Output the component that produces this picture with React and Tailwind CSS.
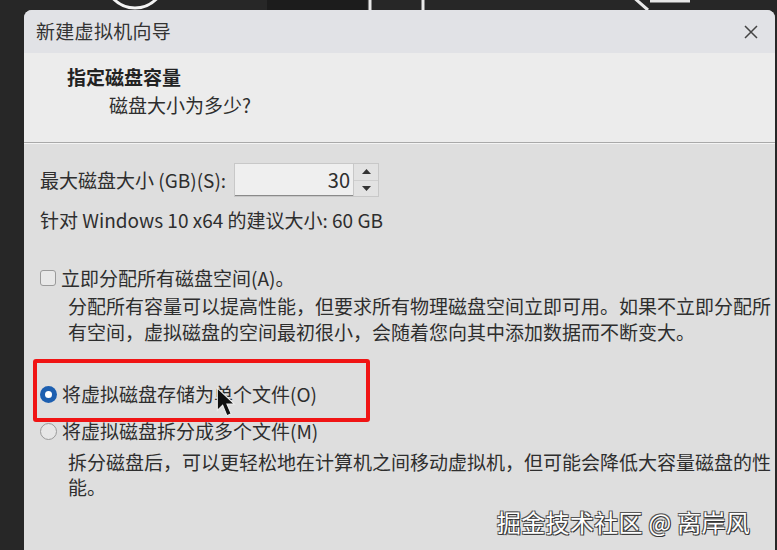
import React from "react";

const CJK = { fontFamily: '"Noto Sans CJK SC", "Noto Sans", sans-serif' };

function Radio({ checked }) {
  return checked ? (
    <span className="w-[17px] h-[17px] rounded-full bg-[#1d5fb0] flex items-center justify-center shrink-0">
      <span className="w-[7px] h-[7px] rounded-full bg-white" />
    </span>
  ) : (
    <span className="w-[17px] h-[17px] rounded-full border border-[#9a9a9a] bg-[#e6e6e6] shrink-0" />
  );
}

export default function App() {
  return (
    <div
      className="relative w-[777px] h-[550px] overflow-hidden bg-[#272727] text-[#2e2e2e]"
      style={CJK}
    >
      {/* background decorations behind the dialog */}
      <svg className="absolute left-0 top-0" width="777" height="12">
        <rect x="267" y="0" width="100" height="12" fill="#1c1c1c" />
        <circle cx="135" cy="-22" r="30" fill="none" stroke="#f2f2f2" strokeWidth="3" />
        <line x1="370" y1="0" x2="370" y2="12" stroke="#e8e8e8" strokeWidth="3" />
        <line x1="423" y1="0" x2="423" y2="12" stroke="#e8e8e8" strokeWidth="3" />
        <path d="M632 -4 L648 10 M650 1 L690 1" stroke="#e8e8e8" strokeWidth="3" fill="none" />
      </svg>

      <div className="pt-[10px] pl-[24px] pr-[2px] h-full">
        <div className="relative h-full rounded-t-[8px] overflow-hidden bg-[#dedede] flex flex-col">
          {/* title bar */}
          <div className="h-[43px] bg-[#e1e2e6] flex items-center justify-between pl-[12px] pr-[17px] shrink-0">
            <span className="text-[19px] text-[#333] tracking-[0.3px]">新建虚拟机向导</span>
            <svg width="14" height="14" viewBox="0 0 14 14">
              <path d="M1 1 L13 13 M13 1 L1 13" stroke="#444" strokeWidth="1.5" />
            </svg>
          </div>

          {/* header */}
          <div className="h-[90px] bg-[#ececec] border-b border-[#a9a9a9] shrink-0 pt-[11px]">
            <div className="pl-[43px] text-[19px] font-bold leading-[26px] text-[#222]">指定磁盘容量</div>
            <div className="pl-[85px] text-[19px] leading-[26px] mt-[2px]">磁盘大小为多少?</div>
          </div>
          <div className="h-px bg-[#f4f4f4]" />

          {/* body */}
          <div className="flex flex-col pl-[16px] pt-[19px] text-[19px]">
            <div className="flex items-center h-[34px]">
              <span className="w-[194px] leading-[26px]">最大磁盘大小 (GB)(S):</span>
              <div className="flex h-[34px] border border-[#c8c8c8]">
                <div className="w-[118px] bg-[#efefef] border-b border-[#8a8a8a] flex items-center justify-end pr-[3px] text-[20px]">
                  30
                </div>
                <div className="w-[25px] flex flex-col bg-[#e2e2e2] border-l border-[#c8c8c8]">
                  <div className="flex-1 flex items-center justify-center border-b border-[#cfcfcf]">
                    <svg width="9" height="5"><path d="M0 5 L4.5 0 L9 5 Z" fill="#333" /></svg>
                  </div>
                  <div className="flex-1 flex items-center justify-center">
                    <svg width="9" height="5"><path d="M0 0 L4.5 5 L9 0 Z" fill="#333" /></svg>
                  </div>
                </div>
              </div>
            </div>

            <div className="leading-[26px] mt-[10px]">针对 Windows 10 x64 的建议大小: 60 GB</div>

            <div className="flex items-center gap-[5px] mt-[32px] leading-[26px]">
              <span className="w-[16px] h-[16px] rounded-[3px] border border-[#9a9a9a] bg-[#e8e8e8] shrink-0" />
              <span>立即分配所有磁盘空间(A)。</span>
            </div>
            <div className="pl-[28px] leading-[26px] mt-[2px] whitespace-nowrap">
              分配所有容量可以提高性能，但要求所有物理磁盘空间立即可用。如果不立即分配所
              <br />
              有空间，虚拟磁盘的空间最初很小，会随着您向其中添加数据而不断变大。
            </div>

            <div className="flex items-center gap-[5px] mt-[36px] leading-[26px] pl-[0px]">
              <Radio checked />
              <span>将虚拟磁盘存储为单个文件(O)</span>
            </div>
            <div className="flex items-center gap-[5px] mt-[11px] leading-[26px]">
              <Radio />
              <span>将虚拟磁盘拆分成多个文件(M)</span>
            </div>
            <div className="pl-[28px] leading-[25px] mt-[5px] whitespace-nowrap">
              拆分磁盘后，可以更轻松地在计算机之间移动虚拟机，但可能会降低大容量磁盘的性
              <br />
              能。
            </div>
          </div>

          {/* red annotation box */}
          <div className="absolute left-[9px] top-[349px] w-[337px] h-[63px] border-[4px] border-[#f01414] rounded-[3px]" />

          {/* watermark */}
          <div
            className="absolute left-[473px] top-[494px] text-[24px] text-white tracking-[0.3px]"
            style={{ textShadow: "1px 1px 0 #333, -1px -1px 0 #555, 1px -1px 0 #555, -1px 1px 0 #555" }}
          >
            掘金技术社区 @ 离岸风
          </div>
        </div>
      </div>

      {/* mouse cursor */}
      <svg className="absolute left-[216px] top-[387px]" width="24" height="32" viewBox="0 0 22 30">
        <path d="M1 1 L1 22 L6 17 L10 27 L14 25 L10 16 L17 16 Z" fill="#111" stroke="#eee" strokeWidth="1" />
      </svg>
    </div>
  );
}
